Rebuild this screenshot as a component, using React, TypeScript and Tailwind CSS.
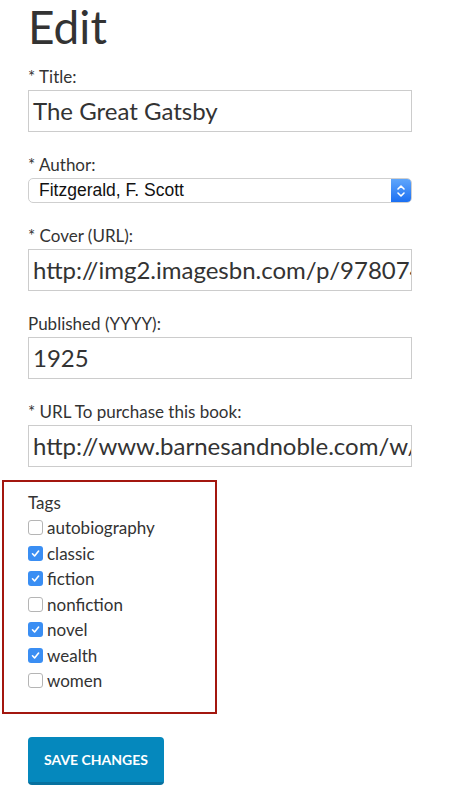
import { ReactNode } from 'react';

const font = { fontFamily: 'Lato, "Open Sans", sans-serif' };

type FieldProps = {
  label: string;
  children: ReactNode;
  last?: boolean;
};

function Field({ label, children, last }: FieldProps) {
  return (
    <div className={last ? 'mb-[13px]' : 'mb-[22px]'}>
      <div className="h-[24px] text-[17px] leading-[22px] text-[#333]">{label}</div>
      {children}
    </div>
  );
}

function TextBox({ value }: { value: string }) {
  return (
    <div className="h-[42px] border border-[#cccccc] bg-white px-[4px] overflow-hidden whitespace-nowrap text-[24px] leading-[40px] text-[#333]">
      {value}
    </div>
  );
}

function AuthorSelect() {
  return (
    <div className="flex h-[25px] rounded-[5px] border border-[#cfcfcf] bg-white overflow-hidden">
      <div
        className="flex-1 pl-[10px] text-[17.5px] leading-[23px] text-[#111]"
        style={{ fontFamily: '"Liberation Sans", Arial, sans-serif' }}
      >
        Fitzgerald, F. Scott
      </div>
      <div className="flex w-[20px] items-center justify-center bg-gradient-to-b from-[#5fa6fb] to-[#1a6ff2]">
        <svg width="10" height="16" viewBox="0 0 10 16" fill="none" stroke="white" strokeWidth="1.6" strokeLinecap="round" strokeLinejoin="round">
          <path d="M2 6 L5 3 L8 6" />
          <path d="M2 10 L5 13 L8 10" />
        </svg>
      </div>
    </div>
  );
}

function Check({ label, checked }: { label: string; checked: boolean }) {
  return (
    <div className="flex h-[25.5px] items-center">
      {checked ? (
        <span className="flex h-[15px] w-[15px] items-center justify-center rounded-[3px] bg-[#3a8ef3]">
          <svg width="11" height="11" viewBox="0 0 11 11" fill="none" stroke="white" strokeWidth="1.6" strokeLinecap="round" strokeLinejoin="round">
            <path d="M2.5 5.8 L4.6 8 L8.6 3" />
          </svg>
        </span>
      ) : (
        <span className="h-[15px] w-[15px] rounded-[3px] border border-[#b5b5b5] bg-white" />
      )}
      <span className="ml-[4px] text-[17px] text-[#333]">{label}</span>
    </div>
  );
}

const tags = [
  { name: 'autobiography', checked: false },
  { name: 'classic', checked: true },
  { name: 'fiction', checked: true },
  { name: 'nonfiction', checked: false },
  { name: 'novel', checked: true },
  { name: 'wealth', checked: true },
  { name: 'women', checked: false },
];

export default function App() {
  return (
    <div className="min-h-[800px] w-[457px] bg-white" style={font}>
      <div className="ml-[28px] w-[384px] pt-[1px]">
        <h1 className="-mt-[3px] h-[68px] text-[46px] leading-[58px] text-[#333]">Edit</h1>
        <Field label="* Title:">
          <TextBox value="The Great Gatsby" />
        </Field>
        <Field label="* Author:">
          <AuthorSelect />
        </Field>
        <Field label="* Cover (URL):">
          <TextBox value="http://img2.imagesbn.com/p/9780743273565_p0_v4_s1200x630.jpg" />
        </Field>
        <Field label="Published (YYYY):">
          <TextBox value="1925" />
        </Field>
        <Field label="* URL To purchase this book:" last>
          <TextBox value="http://www.barnesandnoble.com/w/the-great-gatsby-f-scott-fitzgerald" />
        </Field>
      </div>
      <div className="ml-[2px] h-[234px] w-[215px] border-2 border-[#a3170f] pl-[24px] pt-[9px]">
        <div className="h-[24px] text-[17px] leading-[24px] text-[#333]">Tags</div>
        {tags.map((t) => (
          <Check key={t.name} label={t.name} checked={t.checked} />
        ))}
      </div>
      <div className="ml-[28px] mt-[23px]">
        <button className="h-[48px] w-[136px] rounded-[4px] border-b-[3px] border-[#07719f] bg-[#0588bd] text-[14px] font-bold text-white uppercase">
          Save changes
        </button>
      </div>
    </div>
  );
}
